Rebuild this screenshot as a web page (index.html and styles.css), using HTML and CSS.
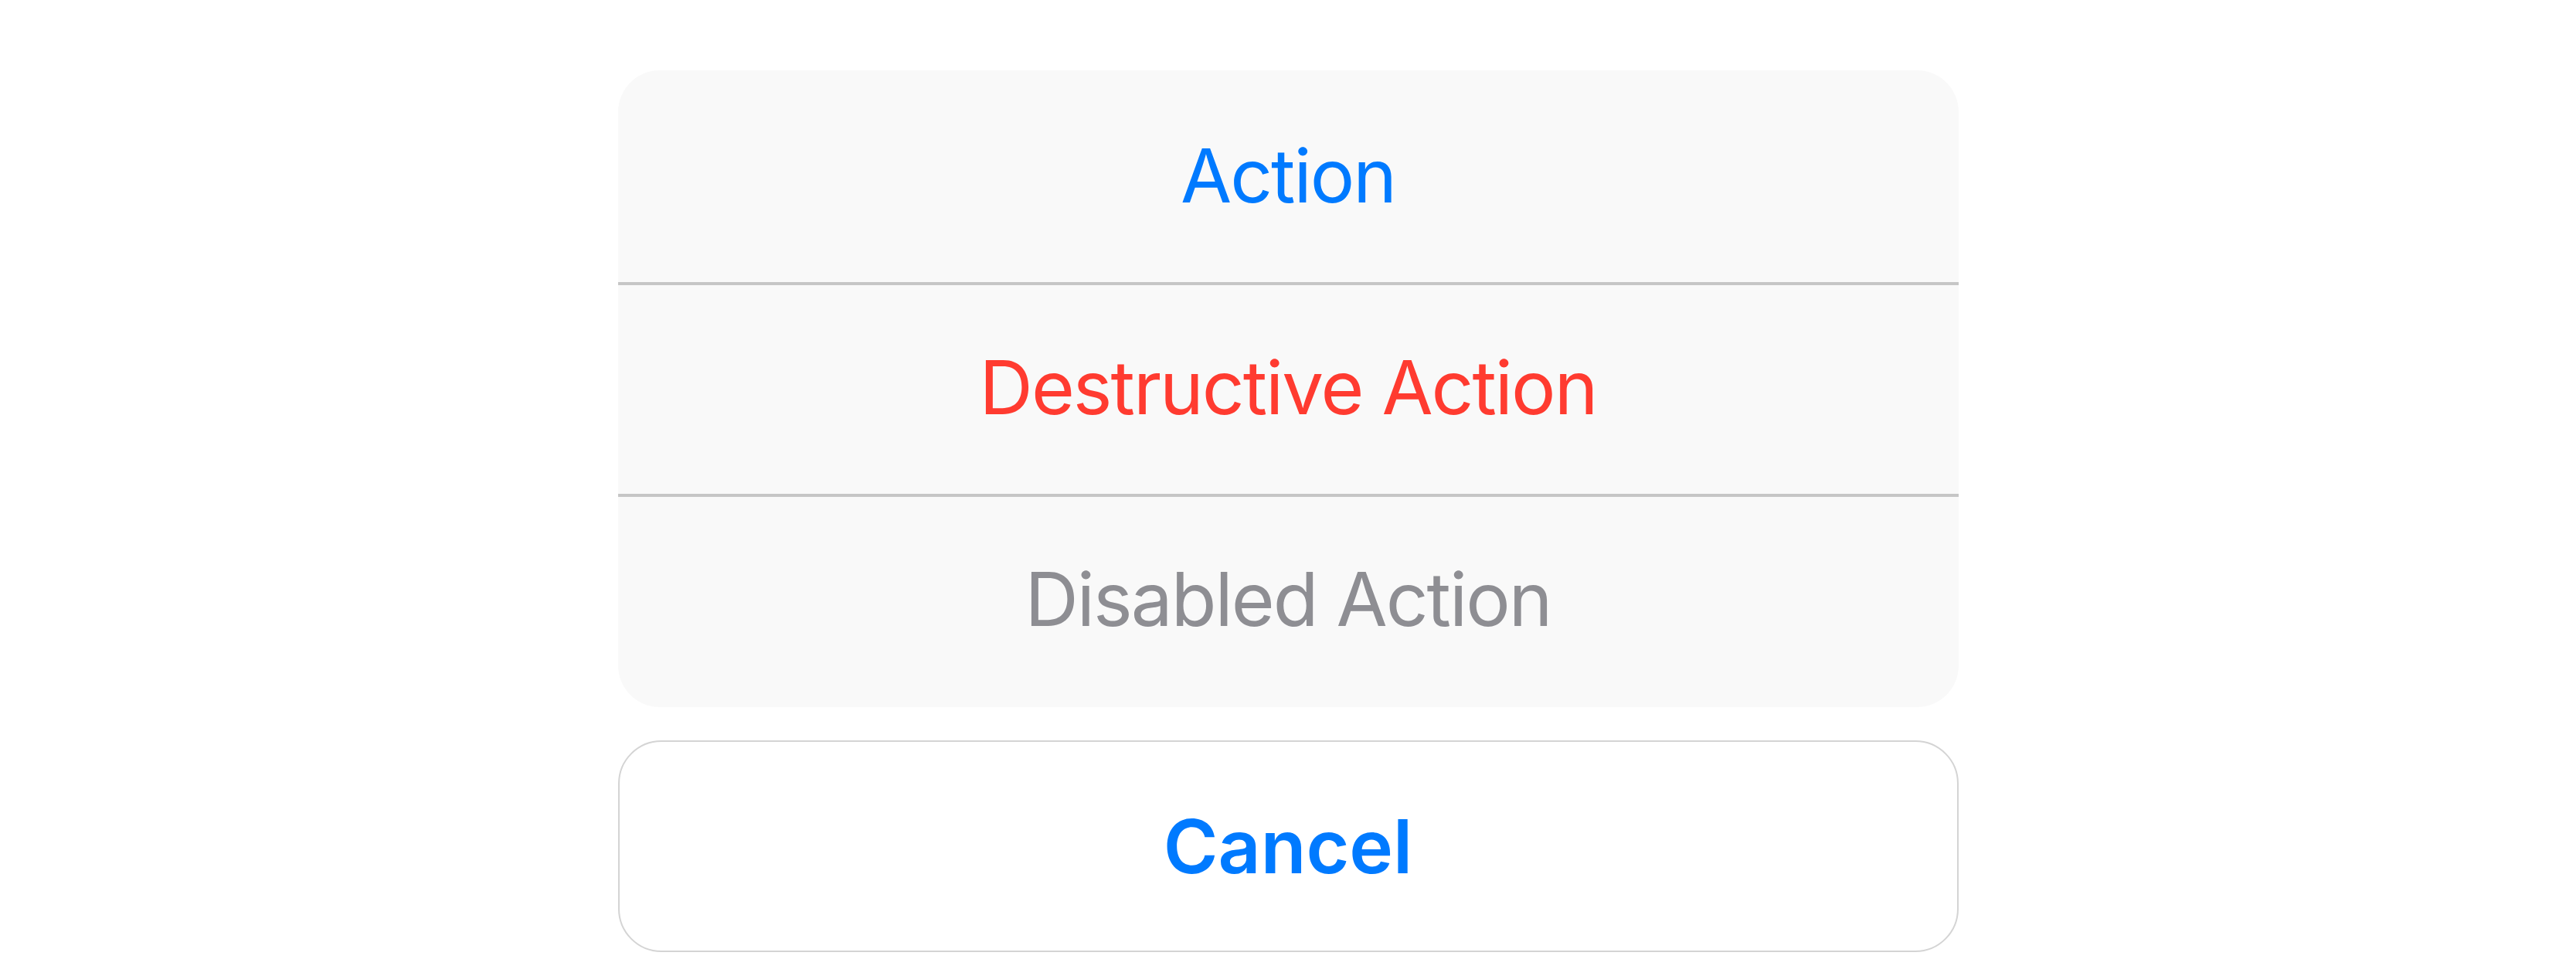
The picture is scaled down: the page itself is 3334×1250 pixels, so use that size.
FILE: index.html
```html
<!DOCTYPE html>
<html>
<head>
<meta charset="utf-8">
<link rel="stylesheet" href="styles.css">
</head>
<body>
<div class="sheet">
  <div class="group">
    <div class="row row-1 action">Action</div>
    <div class="sep"></div>
    <div class="row row-2 destructive">Destructive Action</div>
    <div class="sep"></div>
    <div class="row row-3 disabled">Disabled Action</div>
  </div>
  <div class="cancel">Cancel</div>
</div>
</body>
</html>
```
FILE: styles.css
```css
html, body {
  margin: 0;
  padding: 0;
  background: #ffffff;
}
body {
  font-family: Inter, "Noto Sans", "Liberation Sans", sans-serif;
}
.sheet {
  width: 1735px;
  margin: 91px auto 0;
  display: flex;
  flex-direction: column;
}
.group {
  background: #f9f9f9;
  border-radius: 54px;
  overflow: hidden;
  display: flex;
  flex-direction: column;
}
.row {
  display: flex;
  align-items: center;
  justify-content: center;
  font-size: 96px;
  font-weight: 400;
  letter-spacing: -2px;
  box-sizing: border-box;
}
.row-1 { height: 274px; padding-bottom: 2px; }
.row-2 { height: 270px; padding-bottom: 6px; }
.row-3 { height: 272px; padding-bottom: 8px; }
.sep {
  height: 4px;
  background: #c6c6c6;
}
.action { color: #007aff; }
.destructive { color: #ff3b30; }
.disabled { color: #8e8e93; }
.cancel {
  margin-top: 43px;
  height: 270px;
  border: 2px solid #d4d4d4;
  border-radius: 56px;
  background: #ffffff;
  display: flex;
  align-items: center;
  justify-content: center;
  font-size: 96px;
  font-weight: 600;
  color: #007aff;
}
```
